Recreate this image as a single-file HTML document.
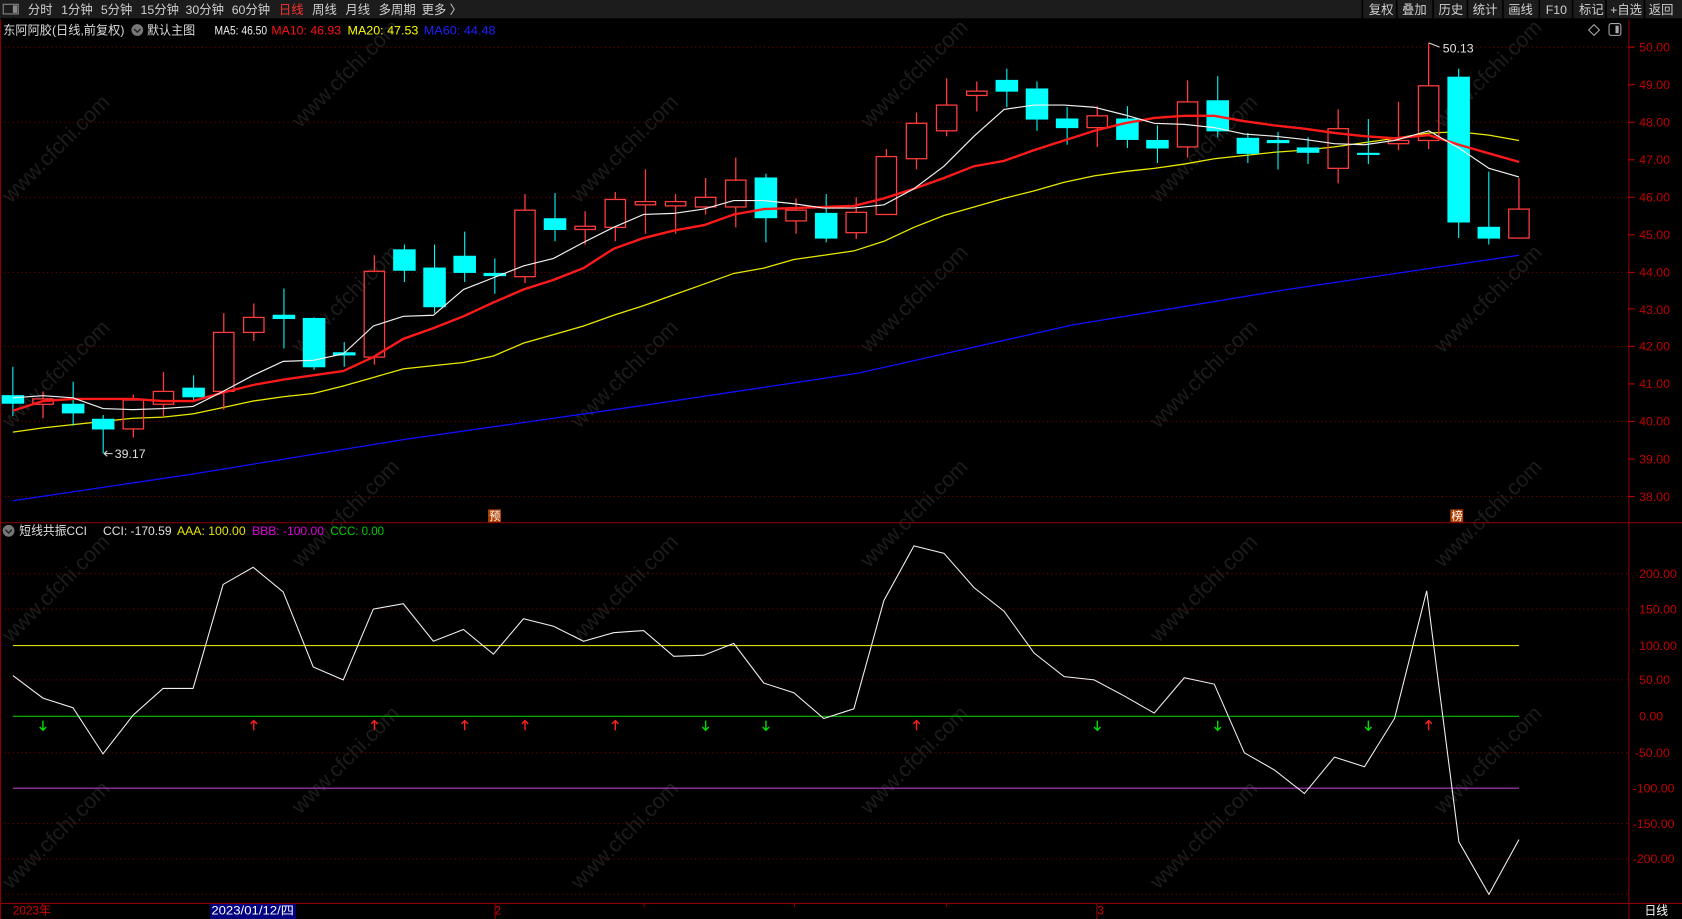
<!DOCTYPE html>
<html><head><meta charset="utf-8"><style>
html,body{margin:0;padding:0;background:#000;overflow:hidden}
svg{display:block}
text{font-family:"Liberation Sans","Noto Sans CJK SC",sans-serif}
</style></head><body>
<svg width="1682" height="919" viewBox="0 0 1568 857" preserveAspectRatio="none" xmlns="http://www.w3.org/2000/svg">
<rect x="0" y="0" width="1568" height="857" fill="#000"/>
<!-- watermarks -->
<g fill="#1c1c1c" font-size="20" font-family="Liberation Sans,sans-serif">
<text transform="translate(10,190) rotate(-45)">www.cfchi.com</text>
<text transform="translate(280,120) rotate(-45)">www.cfchi.com</text>
<text transform="translate(540,190) rotate(-45)">www.cfchi.com</text>
<text transform="translate(810,120) rotate(-45)">www.cfchi.com</text>
<text transform="translate(1080,190) rotate(-45)">www.cfchi.com</text>
<text transform="translate(1345,120) rotate(-45)">www.cfchi.com</text>
<text transform="translate(10,400) rotate(-45)">www.cfchi.com</text>
<text transform="translate(280,330) rotate(-45)">www.cfchi.com</text>
<text transform="translate(540,400) rotate(-45)">www.cfchi.com</text>
<text transform="translate(810,330) rotate(-45)">www.cfchi.com</text>
<text transform="translate(1080,400) rotate(-45)">www.cfchi.com</text>
<text transform="translate(1345,330) rotate(-45)">www.cfchi.com</text>
<text transform="translate(10,600) rotate(-45)">www.cfchi.com</text>
<text transform="translate(280,530) rotate(-45)">www.cfchi.com</text>
<text transform="translate(540,600) rotate(-45)">www.cfchi.com</text>
<text transform="translate(810,530) rotate(-45)">www.cfchi.com</text>
<text transform="translate(1080,600) rotate(-45)">www.cfchi.com</text>
<text transform="translate(1345,530) rotate(-45)">www.cfchi.com</text>
<text transform="translate(10,830) rotate(-45)">www.cfchi.com</text>
<text transform="translate(280,760) rotate(-45)">www.cfchi.com</text>
<text transform="translate(540,830) rotate(-45)">www.cfchi.com</text>
<text transform="translate(810,760) rotate(-45)">www.cfchi.com</text>
<text transform="translate(1080,830) rotate(-45)">www.cfchi.com</text>
<text transform="translate(1345,760) rotate(-45)">www.cfchi.com</text>
</g>
<!-- toolbar -->
<rect x="0" y="0" width="1568" height="17" fill="#1c1c1c"/>
<rect x="3" y="4" width="14" height="9" fill="none" stroke="#888" stroke-width="1"/>
<rect x="12" y="5" width="4" height="7" fill="#888"/>
<g font-size="11.5" fill="#d0d0d0">
<text x="26" y="13">分时</text><text x="57" y="13">1分钟</text><text x="94" y="13">5分钟</text><text x="131" y="13">15分钟</text><text x="173" y="13">30分钟</text><text x="216" y="13">60分钟</text><text x="260" y="13" fill="#ff3030">日线</text><text x="291" y="13">周线</text><text x="322" y="13">月线</text><text x="353" y="13">多周期</text><text x="393" y="13">更多 〉</text>
<text x="1276" y="13">复权</text><text x="1307" y="13">叠加</text><text x="1341" y="13">历史</text><text x="1373" y="13">统计</text><text x="1406" y="13">画线</text><text x="1441" y="13">F10</text><text x="1472" y="13">标记</text><text x="1501" y="13">+自选</text><text x="1537" y="13">返回</text>
</g>
<g stroke="#000" stroke-width="1.5">
<line x1="1270" y1="0" x2="1270" y2="17"/><line x1="1302" y1="0" x2="1302" y2="17"/><line x1="1336" y1="0" x2="1336" y2="17"/><line x1="1368" y1="0" x2="1368" y2="17"/><line x1="1401" y1="0" x2="1401" y2="17"/><line x1="1435" y1="0" x2="1435" y2="17"/><line x1="1466" y1="0" x2="1466" y2="17"/><line x1="1497" y1="0" x2="1497" y2="17"/><line x1="1533" y1="0" x2="1533" y2="17"/>
</g>
<!-- borders -->
<g stroke="#8b0000" stroke-width="1">
<line x1="0.5" y1="18" x2="0.5" y2="857"/>
<line x1="1518.5" y1="18" x2="1518.5" y2="842"/>
<line x1="0" y1="487.5" x2="1568" y2="487.5"/>
<line x1="0" y1="842.5" x2="1568" y2="842.5"/>
<line x1="1518.5" y1="842" x2="1518.5" y2="857"/>
<line x1="1022.5" y1="842" x2="1022.5" y2="857"/>
</g>
<!-- title -->
<g font-size="11.5">
<text x="3" y="32" fill="#dcdcdc" textLength="113" lengthAdjust="spacingAndGlyphs">东阿阿胶(日线,前复权)</text>
<circle cx="128" cy="28" r="5.5" fill="#777"/><path d="M125 27 l3 3 l3 -3" stroke="#222" stroke-width="1.3" fill="none"/>
<text x="137" y="32" fill="#dcdcdc" textLength="45" lengthAdjust="spacingAndGlyphs">默认主图</text>
<text x="200" y="32" fill="#f0f0f0" textLength="49" lengthAdjust="spacingAndGlyphs">MA5: 46.50</text>
<text x="253" y="32" fill="#ff1010" textLength="65" lengthAdjust="spacingAndGlyphs">MA10: 46.93</text>
<text x="324" y="32" fill="#ffff00" textLength="66" lengthAdjust="spacingAndGlyphs">MA20: 47.53</text>
<text x="395" y="32" fill="#2020ff" textLength="67" lengthAdjust="spacingAndGlyphs">MA60: 44.48</text>
</g>
<path d="M1486 23 l5 5 l-5 5 l-5 -5z" fill="none" stroke="#aaa"/>
<rect x="1500" y="22" width="11" height="11" rx="2" fill="none" stroke="#aaa"/><rect x="1506" y="24" width="3" height="7" fill="#aaa"/>
<!-- main grid -->
<g stroke="#7a0000" stroke-width="1" stroke-dasharray="1,3">
<line x1="0" y1="44" x2="1518" y2="44"/><line x1="0" y1="114" x2="1518" y2="114"/><line x1="0" y1="184" x2="1518" y2="184"/><line x1="0" y1="254" x2="1518" y2="254"/><line x1="0" y1="323" x2="1518" y2="323"/><line x1="0" y1="393" x2="1518" y2="393"/><line x1="0" y1="463" x2="1518" y2="463"/>
<line x1="0" y1="535" x2="1518" y2="535"/><line x1="0" y1="568" x2="1518" y2="568"/><line x1="0" y1="634" x2="1518" y2="634"/><line x1="0" y1="702" x2="1518" y2="702"/><line x1="0" y1="768" x2="1518" y2="768"/><line x1="0" y1="801" x2="1518" y2="801"/><line x1="0" y1="834" x2="1518" y2="834"/>
</g>
<!-- right axis -->
<g fill="#c00000" font-size="11.5">
<text x="1528" y="48">50.00</text><text x="1528" y="83">49.00</text><text x="1528" y="118">48.00</text><text x="1528" y="153">47.00</text><text x="1528" y="188">46.00</text><text x="1528" y="223">45.00</text><text x="1528" y="258">44.00</text><text x="1528" y="293">43.00</text><text x="1528" y="327">42.00</text><text x="1528" y="362">41.00</text><text x="1528" y="397">40.00</text><text x="1528" y="432">39.00</text><text x="1528" y="467">38.00</text>
<text x="1528" y="539">200.00</text><text x="1528" y="572">150.00</text><text x="1528" y="606">100.00</text><text x="1528" y="638">50.00</text><text x="1528" y="672">0.00</text><text x="1524" y="706">-50.00</text><text x="1522" y="739">-100.00</text><text x="1522" y="772">-150.00</text><text x="1522" y="805">-200.00</text>
</g>
<g stroke="#c00000">
<line x1="1518" y1="44" x2="1524" y2="44"/><line x1="1518" y1="79" x2="1524" y2="79"/><line x1="1518" y1="114" x2="1524" y2="114"/><line x1="1518" y1="149" x2="1524" y2="149"/><line x1="1518" y1="184" x2="1524" y2="184"/><line x1="1518" y1="219" x2="1524" y2="219"/><line x1="1518" y1="254" x2="1524" y2="254"/><line x1="1518" y1="288" x2="1524" y2="288"/><line x1="1518" y1="323" x2="1524" y2="323"/><line x1="1518" y1="358" x2="1524" y2="358"/><line x1="1518" y1="393" x2="1524" y2="393"/><line x1="1518" y1="428" x2="1524" y2="428"/><line x1="1518" y1="463" x2="1524" y2="463"/>
</g>
<!-- MA60 -->
<polyline fill="none" stroke="#1010ff" stroke-width="1.2" points="12,467 180,442 376,410 600,378 800,348 1000,303 1200,270 1416,238"/>
<!-- MA20 -->
<polyline fill="none" stroke="#e8e800" stroke-width="1.2" points="12,403 40,399 68,396 96,393 124,390 152,389 180,386 208,380 236,374 264,370 292,367 320,360 348,352 376,344 404,341 432,338 460,332 488,320 516,312 544,304 572,294 600,285 628,275 656,265 684,255 712,250 740,242 768,238 796,234 824,225 852,212 880,201 908,193 936,185 964,178 992,170 1020,164 1048,160 1076,157 1104,153 1132,148 1160,145 1188,142 1216,140 1244,137 1272,133 1300,129 1332,124 1360,123 1388,126 1416,131"/>
<!-- candles cyan -->
<g stroke="#00ffff" fill="#00ffff" stroke-width="1">
<line x1="12" y1="342" x2="12" y2="388"/><rect x="2" y="369" width="20" height="7"/>
<line x1="68.2" y1="356" x2="68.2" y2="397"/><rect x="58.2" y="377" width="20" height="8"/>
<line x1="96.2" y1="387" x2="96.2" y2="423"/><rect x="86.2" y="391" width="20" height="9"/>
<line x1="180.5" y1="350" x2="180.5" y2="374"/><rect x="170.5" y="362" width="20" height="8"/>
<line x1="264.7" y1="269" x2="264.7" y2="325"/><rect x="254.7" y="294" width="20" height="3"/>
<line x1="292.8" y1="296" x2="292.8" y2="345"/><rect x="282.8" y="297" width="20" height="45"/>
<line x1="320.9" y1="319" x2="320.9" y2="342"/><rect x="310.9" y="329" width="20" height="2"/>
<line x1="377" y1="228" x2="377" y2="263"/><rect x="367" y="233" width="20" height="19"/>
<line x1="405.1" y1="228" x2="405.1" y2="292"/><rect x="395.1" y="250" width="20" height="36"/>
<line x1="433.2" y1="216" x2="433.2" y2="263"/><rect x="423.2" y="239" width="20" height="15"/>
<line x1="461.3" y1="241" x2="461.3" y2="274"/><rect x="451.3" y="255" width="20" height="2"/>
<line x1="517.4" y1="180" x2="517.4" y2="225"/><rect x="507.4" y="204" width="20" height="10"/>
<line x1="714" y1="162" x2="714" y2="226"/><rect x="704" y="166" width="20" height="37"/>
<line x1="770.2" y1="181" x2="770.2" y2="226"/><rect x="760.2" y="199" width="20" height="23"/>
<line x1="938.6" y1="64" x2="938.6" y2="100"/><rect x="928.6" y="75" width="20" height="10"/>
<line x1="966.7" y1="76" x2="966.7" y2="122"/><rect x="956.7" y="83" width="20" height="28"/>
<line x1="994.8" y1="100" x2="994.8" y2="135"/><rect x="984.8" y="111" width="20" height="8"/>
<line x1="1051" y1="99" x2="1051" y2="138"/><rect x="1041" y="111" width="20" height="19"/>
<line x1="1079" y1="117" x2="1079" y2="152"/><rect x="1069" y="131" width="20" height="7"/>
<line x1="1135.2" y1="71" x2="1135.2" y2="128"/><rect x="1125.2" y="94" width="20" height="28"/>
<line x1="1163.3" y1="124" x2="1163.3" y2="152"/><rect x="1153.3" y="129" width="20" height="14"/>
<line x1="1191.4" y1="123" x2="1191.4" y2="158"/><rect x="1181.4" y="131" width="20" height="2"/>
<line x1="1219.4" y1="128" x2="1219.4" y2="153"/><rect x="1209.4" y="138" width="20" height="4"/>
<line x1="1275.6" y1="111" x2="1275.6" y2="153"/><rect x="1265.6" y="143" width="20" height="1"/>
<line x1="1359.8" y1="64" x2="1359.8" y2="222"/><rect x="1349.8" y="72" width="20" height="135"/>
<line x1="1387.9" y1="160" x2="1387.9" y2="228"/><rect x="1377.9" y="212" width="20" height="10"/>
</g>
<!-- candles red -->
<g stroke="#ff3c3c" fill="none" stroke-width="1.2">
<path d="M40.1 365V372M40.1 377V390"/><rect x="30.6" y="372" width="19" height="5"/>
<path d="M124.3 368V373M124.3 400V408"/><rect x="114.8" y="373" width="19" height="27"/>
<path d="M152.4 347V365M152.4 377V388"/><rect x="142.9" y="365" width="19" height="12"/>
<path d="M208.6 292V310M208.6 365V382"/><rect x="199.1" y="310" width="19" height="55"/>
<path d="M236.6 283V296M236.6 310V318"/><rect x="227.1" y="296" width="19" height="14"/>
<path d="M349 238V253M349 333V340"/><rect x="339.5" y="253" width="19" height="80"/>
<path d="M489.4 181V196M489.4 258V264"/><rect x="479.9" y="196" width="19" height="62"/>
<path d="M545.5 197V211M545.5 214V228"/><rect x="536" y="211" width="19" height="3"/>
<path d="M573.6 179V186M573.6 212V225"/><rect x="564.1" y="186" width="19" height="26"/>
<path d="M601.7 158V188M601.7 191V218"/><rect x="592.2" y="188" width="19" height="3"/>
<path d="M629.8 181V188M629.8 192V218"/><rect x="620.3" y="188" width="19" height="4"/>
<path d="M657.8 166V184M657.8 193V200"/><rect x="648.3" y="184" width="19" height="9"/>
<path d="M685.9 147V168M685.9 193V212"/><rect x="676.4" y="168" width="19" height="25"/>
<path d="M742.1 185V196M742.1 206V218"/><rect x="732.6" y="196" width="19" height="10"/>
<path d="M798.2 184V198M798.2 217V223"/><rect x="788.7" y="198" width="19" height="19"/>
<path d="M826.3 139V146"/><rect x="816.8" y="146" width="19" height="54"/>
<path d="M854.4 105V115M854.4 148V158"/><rect x="844.9" y="115" width="19" height="33"/>
<path d="M882.5 73V98M882.5 122V127"/><rect x="873" y="98" width="19" height="24"/>
<path d="M910.6 76V85M910.6 89V104"/><rect x="901.1" y="85" width="19" height="4"/>
<path d="M1022.9 99V108M1022.9 119V137"/><rect x="1013.4" y="108" width="19" height="11"/>
<path d="M1107.1 75V95M1107.1 137V147"/><rect x="1097.6" y="95" width="19" height="42"/>
<path d="M1247.5 102V120M1247.5 157V171"/><rect x="1238" y="120" width="19" height="37"/>
<path d="M1303.7 95V131M1303.7 134V140"/><rect x="1294.2" y="131" width="19" height="3"/>
<path d="M1331.8 40V80M1331.8 131V139"/><rect x="1322.3" y="80" width="19" height="51"/>
<path d="M1416 166V195"/><rect x="1406.5" y="195" width="19" height="27"/>
</g>
<!-- MA10 -->
<polyline fill="none" stroke="#ff1a1a" stroke-width="2.2" points="12,383 40,374 68,372 96,372 124,372 152,374 180,374 208,366 236,359 264,354 292,350 320,346 348,333 376,316 404,306 432,295 460,282 488,270 516,261 544,250 572,232 600,222 628,215 656,210 684,200 712,195 740,194 768,193 796,192 824,185 852,176 880,166 908,155 936,150 964,140 992,131 1020,122 1048,115 1076,110 1104,108 1132,108 1160,113 1188,117 1216,120 1244,124 1272,127 1300,129 1332,126 1360,135 1388,143 1416,151"/>
<!-- MA5 -->
<polyline fill="none" stroke="#f0f0f0" stroke-width="1.1" points="12,371 40,369 68,371 96,381 124,382 152,381 180,379 208,365 236,350 264,337 292,336 320,330 348,304 376,295 404,294 432,270 460,259 488,248 516,241 544,226 572,212 600,200 628,199 656,195 684,187 712,187 740,190 768,194 796,194 824,191 852,176 880,155 908,127 936,102 964,98 992,98 1020,100 1048,107 1076,115 1104,116 1132,119 1160,125 1188,127 1216,130 1244,134 1272,135 1300,131 1332,122 1360,138 1388,157 1416,165"/>
<!-- price labels -->
<g font-size="11.5" fill="#e0e0e0">
<path d="M97 423 h8 M97 423 l3 -2.5 M97 423 l3 2.5" stroke="#ddd" fill="none"/>
<text x="107" y="427">39.17</text>
<path d="M1332 40 l10 4" stroke="#ddd" fill="none"/>
<text x="1345" y="49">50.13</text>
</g>
<rect x="455" y="475" width="12" height="12" fill="#b04000"/><text x="456" y="485" font-size="10.5" fill="#fff">预</text>
<rect x="1352" y="475" width="12" height="12" fill="#b04000"/><text x="1353" y="485" font-size="10.5" fill="#fff">榜</text>
<!-- CCI title -->
<g font-size="11.5">
<circle cx="8" cy="495" r="5.5" fill="#777"/><path d="M5 494 l3 3 l3 -3" stroke="#222" stroke-width="1.3" fill="none"/>
<text x="18" y="499" fill="#e0e0e0" textLength="63" lengthAdjust="spacingAndGlyphs">短线共振CCI</text>
<text x="96" y="499" fill="#e0e0e0" textLength="64" lengthAdjust="spacingAndGlyphs">CCI: -170.59</text>
<text x="165" y="499" fill="#e8e800" textLength="64" lengthAdjust="spacingAndGlyphs">AAA: 100.00</text>
<text x="235" y="499" fill="#e000e0" textLength="67" lengthAdjust="spacingAndGlyphs">BBB: -100.00</text>
<text x="308" y="499" fill="#00d000" textLength="50" lengthAdjust="spacingAndGlyphs">CCC: 0.00</text>
</g>
<line x1="12" y1="602" x2="1416" y2="602" stroke="#d8d800" stroke-width="1"/>
<line x1="12" y1="668" x2="1416" y2="668" stroke="#00c000" stroke-width="1"/>
<line x1="12" y1="735" x2="1416" y2="735" stroke="#b040c0" stroke-width="1"/>
<polyline fill="none" stroke="#f0f0f0" stroke-width="1" points="12,630 40,651 68,660 96,703 124,667 152,642 180,642 208,545 236,529 264,552 292,622 320,634 348,568 376,563 404,598 432,587 460,610 488,577 516,584 544,598 572,590 600,588 628,612 656,611 684,600 712,637 740,646 768,670 796,661 824,560 852,509 880,516 908,548 936,570 964,609 992,631 1020,634 1048,649 1076,665 1104,632 1132,638 1160,702 1188,718 1216,740 1244,706 1272,715 1300,670 1330,551 1360,785 1388,834 1416,783"/>
<!-- arrows -->
<g stroke="#00e000" stroke-width="1.3" fill="none">
<path d="M40 672v9M37 678l3 3l3-3"/><path d="M657.8 672v9M654.8 678l3 3l3-3"/><path d="M714 672v9M711 678l3 3l3-3"/><path d="M1022.9 672v9M1019.9 678l3 3l3-3"/><path d="M1135.2 672v9M1132.2 678l3 3l3-3"/><path d="M1275.6 672v9M1272.6 678l3 3l3-3"/>
</g>
<g stroke="#ff2020" stroke-width="1.3" fill="none">
<path d="M236.6 672v9M233.6 675l3 -3l3 3"/><path d="M349 672v9M346 675l3 -3l3 3"/><path d="M433.2 672v9M430.2 675l3 -3l3 3"/><path d="M489.4 672v9M486.4 675l3 -3l3 3"/><path d="M573.6 672v9M570.6 675l3 -3l3 3"/><path d="M854.4 672v9M851.4 675l3 -3l3 3"/><path d="M1331.8 672v9M1328.8 675l3 -3l3 3"/>
</g>
<!-- bottom axis -->
<g font-size="11">
<text x="12" y="853" fill="#d00000">2023年</text>
<rect x="196" y="843" width="80" height="14" fill="#000080"/>
<text x="197" y="853" fill="#fff" textLength="77" lengthAdjust="spacingAndGlyphs">2023/01/12/四</text>
<text x="461" y="853" fill="#d00000">2</text>
<text x="1023" y="853" fill="#d00000">3</text>
<text x="1533" y="853" fill="#fff">日线</text>
</g>
<g stroke="#8b0000"><line x1="461.5" y1="842" x2="461.5" y2="857"/><line x1="600.5" y1="842" x2="600.5" y2="846"/><line x1="740.5" y1="842" x2="740.5" y2="846"/><line x1="882.5" y1="842" x2="882.5" y2="846"/></g>
</svg>
</body></html>
